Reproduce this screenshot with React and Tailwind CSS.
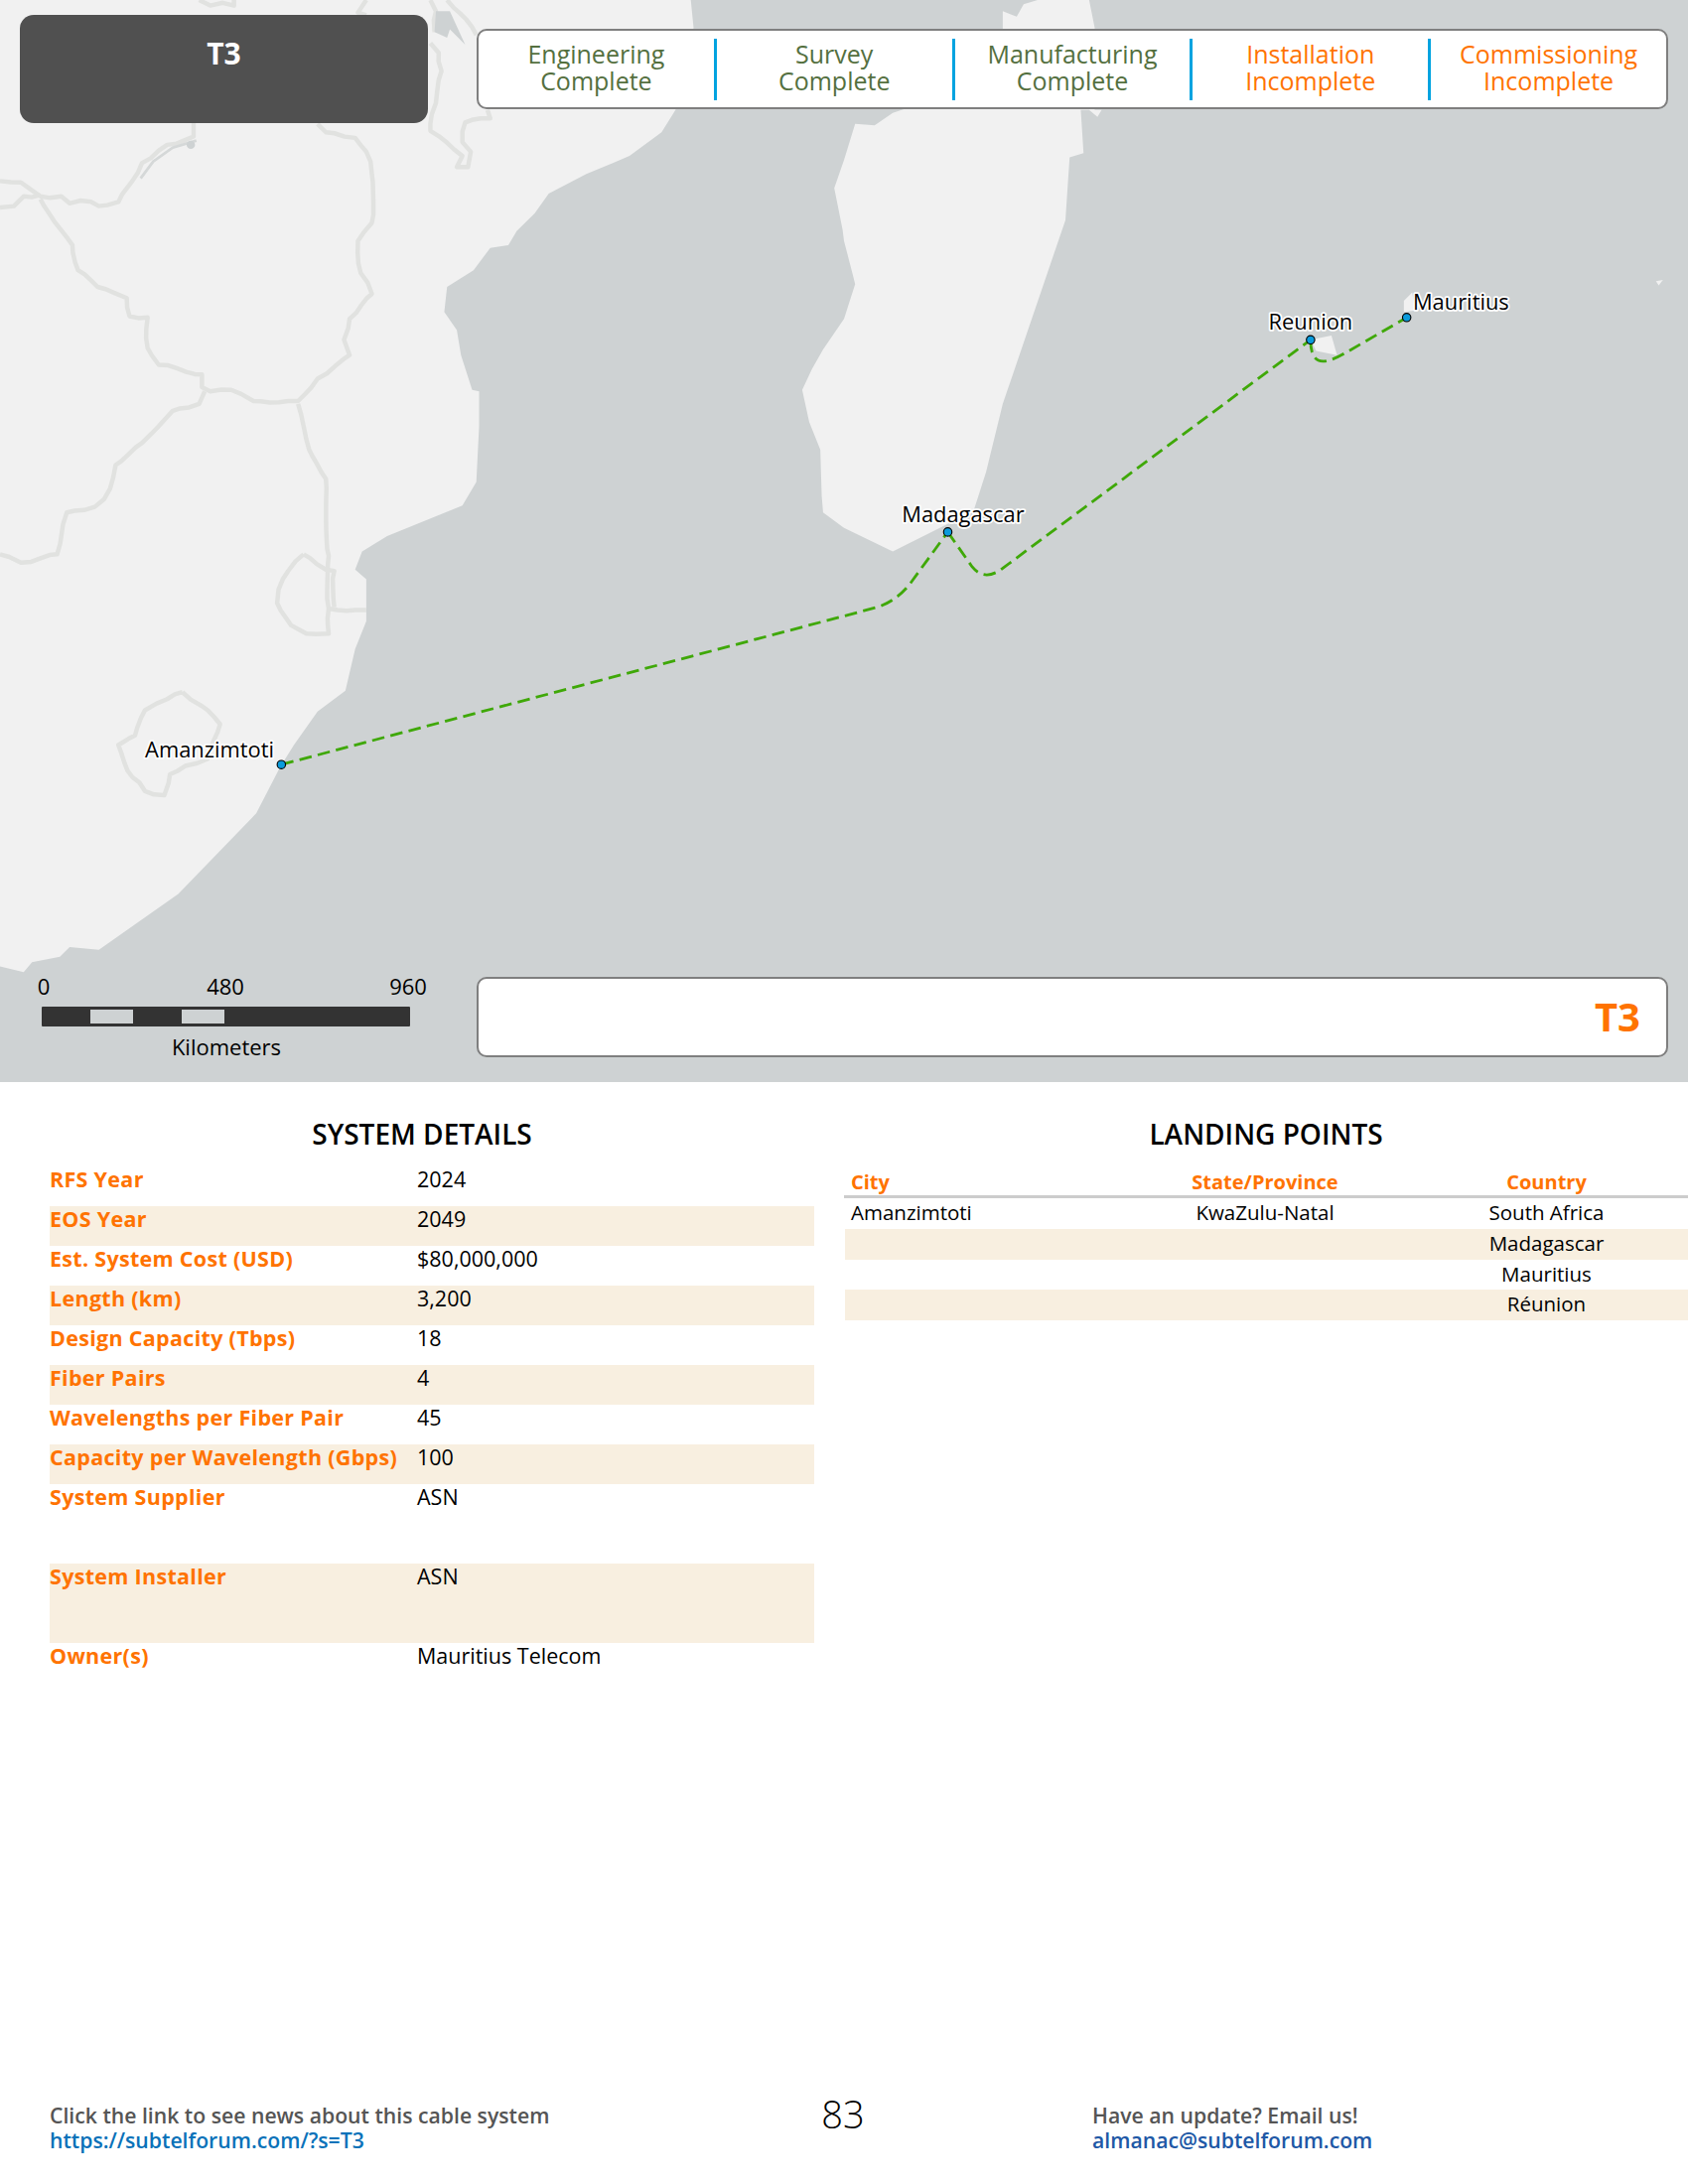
import React from 'react';

const borders = [
  '0,130 15,131 29,141 44,141 50,146 58,144 71,148 85,145 95,130 102,117 120,104 139,98 139,88',
  '0,149 10,148 17,141 29,140',
  '29,143 39,159 52,176 56,194 70,206 91,214 93,227 106,228 106,250 114,262 145,269 145,278 151,281 166,280 182,288 214,288 228,272 251,255 247,244 251,229 267,211 259,196 257,173 267,160 267,125 263,109 255,99 234,95 228,89',
  '147,281 143,290 124,295 114,306 102,318 83,334 79,351 68,364 48,368 44,385 41,398 15,404 0,398',
  '214,290 222,323 234,344 236,399 236,437 263,438',
  '218,398 203,416 199,433 209,449 220,455 236,455 236,437',
  '218,398 234,409 240,410 240,436',
  '131,497 120,502 104,510 97,528 85,535 95,558 104,568 118,571 122,556 133,550 149,545 158,520 145,507 131,497',
  '143,0 151,4 160,2 168,4 168,0',
  '263,0 257,9 263,11',
  '309,0 313,8 312,23',
  '321,0 342,25',
  '309,31 315,38 317,51 313,74 309,89 309,94 332,112 328,120 336,120 338,109 332,102 334,88 352,85 350,79',
];

// border lines in the picture are jagged, so break each segment up a bit
const roughen = (pts) => {
  const list = pts.split(' ').map((p) => p.split(',').map(Number));
  const out = [];
  list.forEach(([x, y], i) => {
    out.push(`${x},${y}`);
    const next = list[i + 1];
    if (!next) return;
    const steps = Math.floor(Math.hypot(next[0] - x, next[1] - y) / 6);
    for (let s = 1; s < steps; s++) {
      const t = s / steps;
      const wx = Math.sin((x + s) * 12.9) * 1.1;
      const wy = Math.cos((y + s) * 7.3) * 1.1;
      out.push(`${(x + (next[0] - x) * t + wx).toFixed(1)},${(y + (next[1] - y) * t + wy).toFixed(1)}`);
    }
  });
  return out.join(' ');
};

const africa = '0,0 496,0 498,20 485,79 475,95 452,112 440,117 421,125 394,139 384,153 371,166 365,176 352,178 340,194 321,206 319,224 328,237 331,255 339,280 344,281 344,306 342,346 332,363 278,385 260,396 255,409 263,416 263,446 255,466 248,496 228,511 211,535 201,551 184,584 128,642 71,682 50,680 43,687 23,691 17,698 0,694';
const madagascar = '606,115 614,89 628,90 641,81 650,78 720,60 720,8 730,12 735,3 745,0 782,0 786,20 786,79 791,79 788,84 782,79 776,79 778,110 768,113 765,158 720,290 708,339 699,367 641,396 606,379 591,368 590,356 589,323 581,303 576,280 583,265 591,251 606,229 614,204 612,196 606,173 605,165 599,135';

const sites = [
  { name: 'Amanzimtoti', x: 202, y: 549, tx: 150.5, ty: 544 },
  { name: 'Madagascar', x: 680.5, y: 382, tx: 691.5, ty: 375 },
  { name: 'Reunion', x: 941, y: 244, tx: 941, ty: 237 },
  { name: 'Mauritius', x: 1010, y: 228, tx: 1049, ty: 222.5 },
];

const stages = [
  ['Engineering', 'Complete', 'text-[#54703f]'],
  ['Survey', 'Complete', 'text-[#54703f]'],
  ['Manufacturing', 'Complete', 'text-[#54703f]'],
  ['Installation', 'Incomplete', 'text-[#ff7300]'],
  ['Commissioning', 'Incomplete', 'text-[#ff7300]'],
];

const details = [
  ['RFS Year', '2024'],
  ['EOS Year', '2049'],
  ['Est. System Cost (USD)', '$80,000,000'],
  ['Length (km)', '3,200'],
  ['Design Capacity (Tbps)', '18'],
  ['Fiber Pairs', '4'],
  ['Wavelengths per Fiber Pair', '45'],
  ['Capacity per Wavelength (Gbps)', '100'],
  ['System Supplier', 'ASN', true],
  ['System Installer', 'ASN', true],
  ['Owner(s)', 'Mauritius Telecom'],
];

const landings = [
  ['Amanzimtoti', 'KwaZulu-Natal', 'South Africa'],
  ['', '', 'Madagascar'],
  ['', '', 'Mauritius'],
  ['', '', 'Réunion'],
];

const MapArt = () => (
  <svg className="absolute inset-0 w-full h-full" viewBox="0 0 1212 777" preserveAspectRatio="none">
    <polygon points={africa} fill="#f1f1f1" />
    <polygon points={madagascar} fill="#f1f1f1" />
    <polygon points="941,244 956,241 960,255 945,252" fill="#f1f1f1" />
    <polygon points="1008,216 1014,210 1016,223 1008,224" fill="#f1f1f1" />
    <polygon points="1189,202 1194,201 1191,205" fill="#f1f1f1" />
    {borders.map((b) => (
      <polyline key={b} points={roughen(b)} fill="none" stroke="#e1e2e0" strokeWidth="3.2" strokeLinejoin="round" />
    ))}
    {/* lakes */}
    <polyline points="141,101 124,106 110,116 101,128" fill="none" stroke="#d5d8d8" strokeWidth="2" />
    <circle cx="137" cy="104" r="3" fill="#ced2d3" />
    <polygon points="313,8 323,8 334,32 323,21 321,27 312,23" fill="#ced2d3" />
    {/* cable route */}
    <g fill="none" stroke="#3fa808" strokeWidth="2" strokeDasharray="9 4.5">
      <path d="M202 549 L630 436 Q645 431 655 417 L680.5 382" />
      <path d="M680.5 382 L698 407 Q707 418 720 408 L941 244" />
      <path d="M941 244 Q941 262 953 259 Q958 258 965 254 L1010 228" />
    </g>
    {sites.map((s) => (
      <circle key={s.name} cx={s.x} cy={s.y} r="3" fill="#0a9bdc" stroke="#000" strokeWidth="0.8" />
    ))}
    {sites.map((s) => (
      <text
        key={s.name}
        x={s.tx}
        y={s.ty}
        textAnchor="middle"
        fontSize="15.6"
        fill="#000"
        stroke="#fff"
        strokeWidth="2.5"
        paintOrder="stroke"
        strokeLinejoin="round"
      >
        {s.name}
      </text>
    ))}
  </svg>
);

const ScaleBar = () => (
  <div className="-mb-[2px] w-[420px] pl-[20px] text-[22px] leading-[26px] text-black">
    <div className="relative h-[26px]">
      <span className="absolute left-[24px] -translate-x-1/2">0</span>
      <span className="absolute left-[207px] -translate-x-1/2">480</span>
      <span className="absolute left-[391px] -translate-x-1/2">960</span>
    </div>
    <div className="ml-[22px] mt-[8px] flex h-[20px] w-[371px] rounded-[1px] bg-[#333333] pl-[49px] pt-[3px]">
      <div className="h-[14px] w-[43px] bg-[#ced2d3]" />
      <div className="ml-[49px] h-[14px] w-[43px] bg-[#ced2d3]" />
    </div>
    <div className="mt-[7px] w-[416px] text-center">Kilometers</div>
  </div>
);

const App = () => {
  return (
    <div className="flex h-[2200px] w-[1700px] flex-col bg-white font-['Open_Sans',_'Liberation_Sans',_sans-serif] text-black">
      {/* Map */}
      <div className="relative flex h-[1090px] flex-col justify-between overflow-hidden bg-[#ced2d3]">
        <MapArt />

        <div className="relative flex items-start pl-[20px] pt-[15px]">
          <div className="h-[109px] w-[411px] rounded-[14px] bg-[#505050] pt-[19px] text-center text-[30px] font-bold leading-[40px] text-white">
            T3
          </div>
          <div className="ml-[49px] mt-[14px] flex h-[81px] w-[1200px] items-center rounded-[10px] border-2 border-[#7f7f7f] bg-white">
            {stages.map(([a, b, color], i) => (
              <div
                key={a}
                className={`h-[62px] flex-1 pt-[2px] text-center text-[25px] leading-[27px] ${color} ${i < 4 ? 'border-r-[3px] border-[#00a3e0]' : ''}`}
              >
                <div>{a}</div>
                <div>{b}</div>
              </div>
            ))}
          </div>
        </div>

        <div className="relative flex items-end pb-[25px]">
          <ScaleBar />
          <div className="ml-[60px] flex h-[81px] w-[1200px] items-center justify-end rounded-[10px] border-2 border-[#7f7f7f] bg-white pb-[2px] pr-[26px] text-[40px] font-bold text-[#ff7300]">
            T3
          </div>
        </div>
      </div>

      {/* Tables */}
      <div className="flex pt-[33px]">
        <div className="ml-[50px] w-[770px]">
          <h2 className="pr-[20px] text-center text-[28px] font-semibold leading-[38px]">SYSTEM DETAILS</h2>
          <div className="mt-[14px] text-[21.5px] leading-[26px]">
            {details.map(([label, value, tall], i) => (
              <div
                key={label}
                className={`flex ${tall ? 'h-[80px]' : 'h-[40px]'} ${i % 2 === 1 ? 'bg-[#f8efe0]' : ''}`}
              >
                <div className="w-[370px] whitespace-nowrap font-bold tracking-[0.3px] text-[#ff7300]">{label}</div>
                <div>{value}</div>
              </div>
            ))}
          </div>
        </div>

        <div className="ml-[30px] w-[850px]">
          <h2 className="text-center text-[28px] font-semibold leading-[38px]">LANDING POINTS</h2>
          <div className="mt-[12px] grid h-[34px] grid-cols-[285px_278px_286px] border-b-[3px] border-[#cccccc] text-center text-[20px] font-bold leading-[36px] text-[#ff7300]">
            <div className="pl-[7px] text-left">City</div>
            <div>State/Province</div>
            <div className="pl-[3px]">Country</div>
          </div>
          {landings.map(([city, state, country], i) => (
            <div
              key={country}
              className={`ml-[1px] grid h-[30.75px] grid-cols-[284px_278px_286px] text-center text-[20.5px] leading-[28px] ${i % 2 === 1 ? 'bg-[#f8efe0]' : ''}`}
            >
              <div className="pl-[6px] text-left">{city}</div>
              <div>{state}</div>
              <div className="pl-[3px]">{country}</div>
            </div>
          ))}
        </div>
      </div>

      {/* Footer */}
      <div className="mt-auto grid grid-cols-[750px_98px_1fr] pb-[32px] pl-[50px] text-[21.2px] font-semibold leading-[25px] text-[#555555]">
        <div>
          <div>Click the link to see news about this cable system</div>
          <div className="text-[#0a72b9]">https://subtelforum.com/?s=T3</div>
        </div>
        <div className="-mt-[11px] text-center text-[38px] font-light leading-[44px] text-black">83</div>
        <div className="pl-[202px]">
          <div>Have an update? Email us!</div>
          <div className="text-[#2058a6]">almanac@subtelforum.com</div>
        </div>
      </div>
    </div>
  );
};

export default App;
